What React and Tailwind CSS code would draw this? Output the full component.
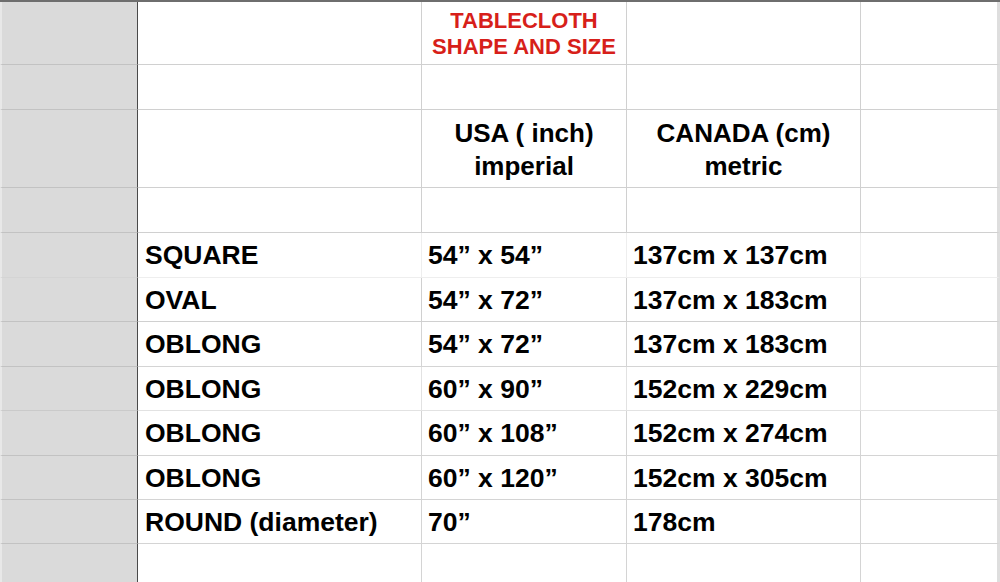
import React from "react";

const rows = [
  { h: "h-[63px]", line: "border-[#d0d0d0]", gline: "border-[#c2c2c2]", kind: "title" },
  { h: "h-[45px]", line: "border-[#d0d0d0]", gline: "border-[#c2c2c2]", kind: "empty" },
  { h: "h-[78px]", line: "border-[#d0d0d0]", gline: "border-[#c2c2c2]", kind: "head" },
  { h: "h-[45px]", line: "border-[#d0d0d0]", gline: "border-[#c2c2c2]", kind: "empty" },
  { h: "h-[45px]", line: "border-[#eeeeee]", gline: "border-[#d4d4d4]", cells: ["SQUARE", "54” x 54”", "137cm x 137cm"] },
  { h: "h-[44px]", line: "border-[#d0d0d0]", gline: "border-[#c2c2c2]", cells: ["OVAL", "54” x 72”", "137cm x 183cm"] },
  { h: "h-[45px]", line: "border-[#d4d4d4]", gline: "border-[#c2c2c2]", cells: ["OBLONG", "54” x 72”", "137cm x 183cm"] },
  { h: "h-[44px]", line: "border-[#e2e2e2]", gline: "border-[#cacaca]", cells: ["OBLONG", "60” x 90”", "152cm x 229cm"] },
  { h: "h-[45px]", line: "border-[#d4d4d4]", gline: "border-[#c2c2c2]", cells: ["OBLONG", "60” x 108”", "152cm x 274cm"] },
  { h: "h-[44px]", line: "border-[#d4d4d4]", gline: "border-[#c2c2c2]", cells: ["OBLONG", "60” x 120”", "152cm x 305cm"] },
  { h: "h-[44px]", line: "border-[#d4d4d4]", gline: "border-[#c2c2c2]", cells: ["ROUND (diameter)", "70”", "178cm"] },
  { h: "h-[40px]", line: "border-[#d4d4d4]", gline: "border-[#c2c2c2]", kind: "empty" },
];

function Row({ row }) {
  const { h, line, gline, kind, cells } = row;
  const cell = `border-b border-r ${line} flex items-center`;
  let c2 = null, c3 = null, c4 = null;
  if (kind === "title") {
    c3 = (
      <div className="w-full text-center text-[22px] leading-[26px] pt-[1px] text-[#d71f1a]">
        TABLECLOTH
        <br />
        SHAPE AND SIZE
      </div>
    );
  } else if (kind === "head") {
    c3 = (
      <div className="w-full text-center text-[26px] leading-[33px] pt-[3px]">
        USA ( inch)
        <br />
        imperial
      </div>
    );
    c4 = (
      <div className="w-full text-center text-[26px] leading-[33px] pt-[3px]">
        CANADA (cm)
        <br />
        metric
      </div>
    );
  } else if (cells) {
    c2 = <span className="pl-[7px] pt-[2px] whitespace-nowrap">{cells[0]}</span>;
    c3 = <span className="pl-[6px] pt-[2px] whitespace-nowrap">{cells[1]}</span>;
    c4 = <span className="pl-[6px] pt-[2px] whitespace-nowrap">{cells[2]}</span>;
  }
  return (
    <div className={`flex ${h} shrink-0`}>
      <div className={`w-[138px] shrink-0 bg-[#dadada] border-b ${gline} border-r border-r-[#4a4a4a] border-l-2 border-l-[#e8e8e8]`} />
      <div className={`w-[284px] shrink-0 ${cell}`}>{c2}</div>
      <div className={`w-[205px] shrink-0 ${cell}`}>{c3}</div>
      <div className={`w-[234px] shrink-0 ${cell}`}>{c4}</div>
      <div className={`flex-1 border-b ${line} border-r-[3px] border-r-[#dedede]`} />
    </div>
  );
}

export default function App() {
  return (
    <div className="w-[1000px] h-[582px] overflow-hidden bg-white flex flex-col border-t-2 border-[#6e6e6e] font-['Liberation_Sans',Arial,sans-serif] font-bold text-[26.5px] text-black">
      {rows.map((r, i) => (
        <Row key={i} row={r} />
      ))}
    </div>
  );
}
